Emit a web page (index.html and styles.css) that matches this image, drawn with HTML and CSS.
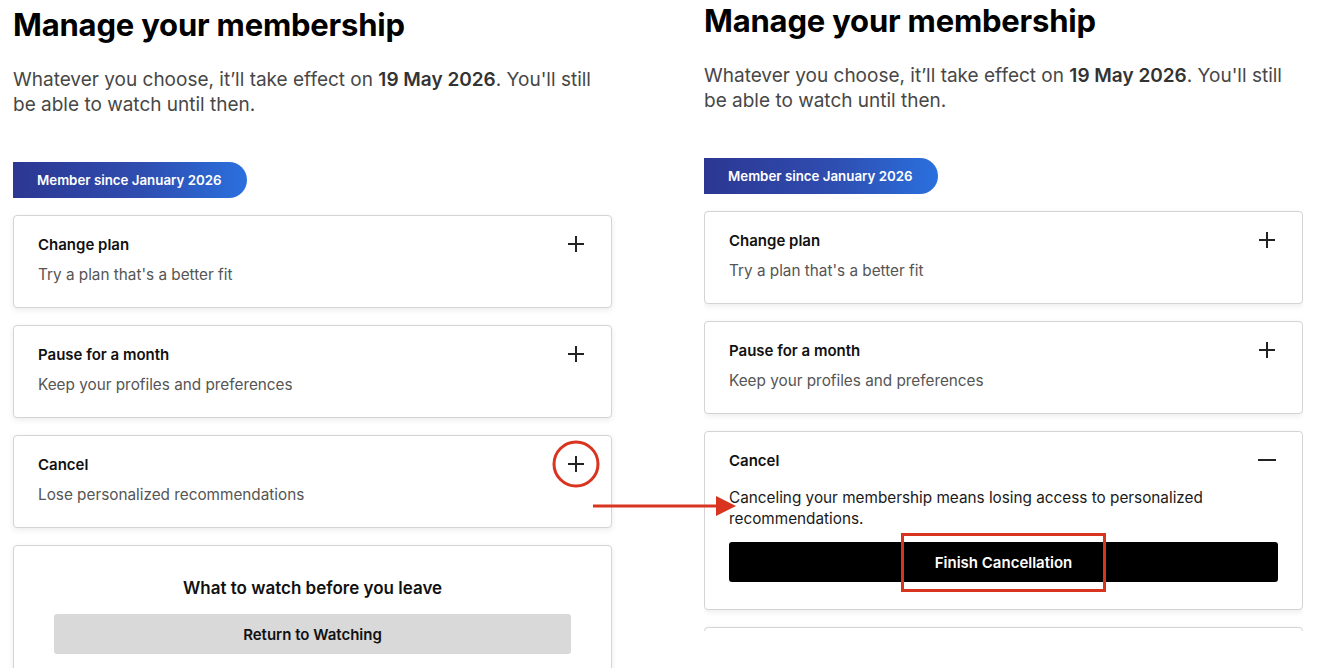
FILE: index.html
```html
<!DOCTYPE html>
<html lang="en">
<head>
<meta charset="utf-8">
<title>Manage your membership</title>
<link rel="stylesheet" href="styles.css">
</head>
<body>
<div class="stage">
  <section class="panel panel-left">
    <h1 class="title">Manage your membership</h1>
    <p class="lead">Whatever you choose, it’ll take effect on <b>19 May 2026</b>. You'll still be able to watch until then.</p>
    <div class="badge">Member since January 2026</div>
    <div class="cards">
      <div class="card">
        <div class="card-head"><span class="card-title">Change plan</span><span class="icon plus"></span></div>
        <div class="card-sub">Try a plan that's a better fit</div>
      </div>
      <div class="card">
        <div class="card-head"><span class="card-title">Pause for a month</span><span class="icon plus"></span></div>
        <div class="card-sub">Keep your profiles and preferences</div>
      </div>
      <div class="card">
        <div class="card-head"><span class="card-title">Cancel</span><span class="icon plus"></span></div>
        <div class="card-sub">Lose personalized recommendations</div>
      </div>
      <div class="card card-watch">
        <div class="watch-title">What to watch before you leave</div>
        <button class="btn btn-gray">Return to Watching</button>
      </div>
    </div>
  </section>
  <section class="panel panel-right">
    <h1 class="title">Manage your membership</h1>
    <p class="lead">Whatever you choose, it’ll take effect on <b>19 May 2026</b>. You'll still be able to watch until then.</p>
    <div class="badge">Member since January 2026</div>
    <div class="cards">
      <div class="card">
        <div class="card-head"><span class="card-title">Change plan</span><span class="icon plus"></span></div>
        <div class="card-sub">Try a plan that's a better fit</div>
      </div>
      <div class="card">
        <div class="card-head"><span class="card-title">Pause for a month</span><span class="icon plus"></span></div>
        <div class="card-sub">Keep your profiles and preferences</div>
      </div>
      <div class="card card-open">
        <div class="card-head"><span class="card-title">Cancel</span><span class="icon minus"></span></div>
        <div class="card-body">Canceling your membership means losing access to personalized recommendations.</div>
        <button class="btn btn-black">Finish Cancellation</button>
      </div>
      <div class="card card-stub"></div>
    </div>
  </section>
  <svg class="marks" width="1319" height="668" viewBox="0 0 1319 668" aria-hidden="true">
    <circle cx="576" cy="464" r="22" fill="none" stroke="#d9341f" stroke-width="3"/>
    <line x1="593" y1="506" x2="718" y2="506" stroke="#d9341f" stroke-width="3"/>
    <polygon points="716,496 736,506 716,516" fill="#d9341f"/>
    <rect x="902.5" y="534.5" width="202" height="56" fill="none" stroke="#d9341f" stroke-width="3"/>
  </svg>
</div>
</body>
</html>
```

FILE: styles.css
```css
* { box-sizing: border-box; }
html, body { margin: 0; padding: 0; background: #fff; }
body {
  font-family: Inter, "Noto Sans", "Liberation Sans", sans-serif;
  color: #000;
}
.stage {
  position: relative;
  width: 1319px;
  height: 668px;
  overflow: hidden;
  display: flex;
  gap: 92px;
  padding-left: 13px;
}
.panel {
  width: 599px;
  flex: none;
}
.panel-left { padding-top: 4px; }
.panel-right { height: 631px; overflow: hidden; }

.title {
  margin: 1px 0 0;
  font-size: 31px;
  line-height: 40px;
  font-weight: 700;
  letter-spacing: -0.2px;
}
.lead {
  margin: 22px 0 0;
  font-size: 19px;
  line-height: 25px;
  color: #474747;
}
.lead b { font-weight: 600; color: #333; }

.badge {
  margin-top: 45px;
  width: 234px;
  height: 36px;
  display: flex;
  align-items: center;
  padding-left: 24px;
  border-radius: 0 18px 18px 0;
  background: linear-gradient(90deg, #2c3792 0%, #2f4db0 55%, #2a70de 100%);
  color: #fff;
  font-size: 13.3px;
  font-weight: 600;
}

.cards {
  margin-top: 17px;
  display: flex;
  flex-direction: column;
  gap: 17px;
}
.card {
  border: 1px solid #d4d4d4;
  border-radius: 4px;
  background: #fff;
  box-shadow: 0 2px 6px rgba(0,0,0,0.08);
  padding: 18px 24px 22px 24px;
}
.card-head {
  display: flex;
  justify-content: space-between;
  align-items: center;
  height: 20px;
}
.card-title {
  font-size: 15px;
  font-weight: 600;
  color: #111;
}
.card-sub {
  margin-top: 11px;
  font-size: 15.3px;
  line-height: 20px;
  color: #555;
}
.icon {
  position: relative;
  width: 16px;
  height: 16px;
  flex: none;
  margin-right: 3px;
}
.icon::before, .icon::after {
  content: "";
  position: absolute;
  background: #222;
}
.icon::before { left: 0; right: 0; top: 7px; height: 1.6px; }
.plus::after { top: 0; bottom: 0; left: 7.2px; width: 1.6px; }
.minus::after { display: none; }
.minus::before { left: -1px; right: -1px; }

.card-open { padding-bottom: 27px; }
.card-body {
  margin-top: 17px;
  font-size: 15.3px;
  line-height: 21px;
  color: #1a1a1a;
}
.btn {
  display: block;
  width: 100%;
  height: 40px;
  border: 0;
  border-radius: 3px;
  font-family: inherit;
  font-size: 15px;
  font-weight: 600;
}
.btn-black {
  margin-top: 13px;
  background: #000;
  color: #fff;
}
.card-watch {
  padding: 31px 40px 40px 40px;
}
.card-stub { height: 60px; }
.watch-title {
  text-align: center;
  font-size: 17px;
  line-height: 22px;
  font-weight: 600;
  color: #111;
}
.btn-gray {
  margin-top: 15px;
  background: #d9d9d9;
  color: #111;
}
.marks {
  position: absolute;
  left: 0;
  top: 0;
  pointer-events: none;
}
```
